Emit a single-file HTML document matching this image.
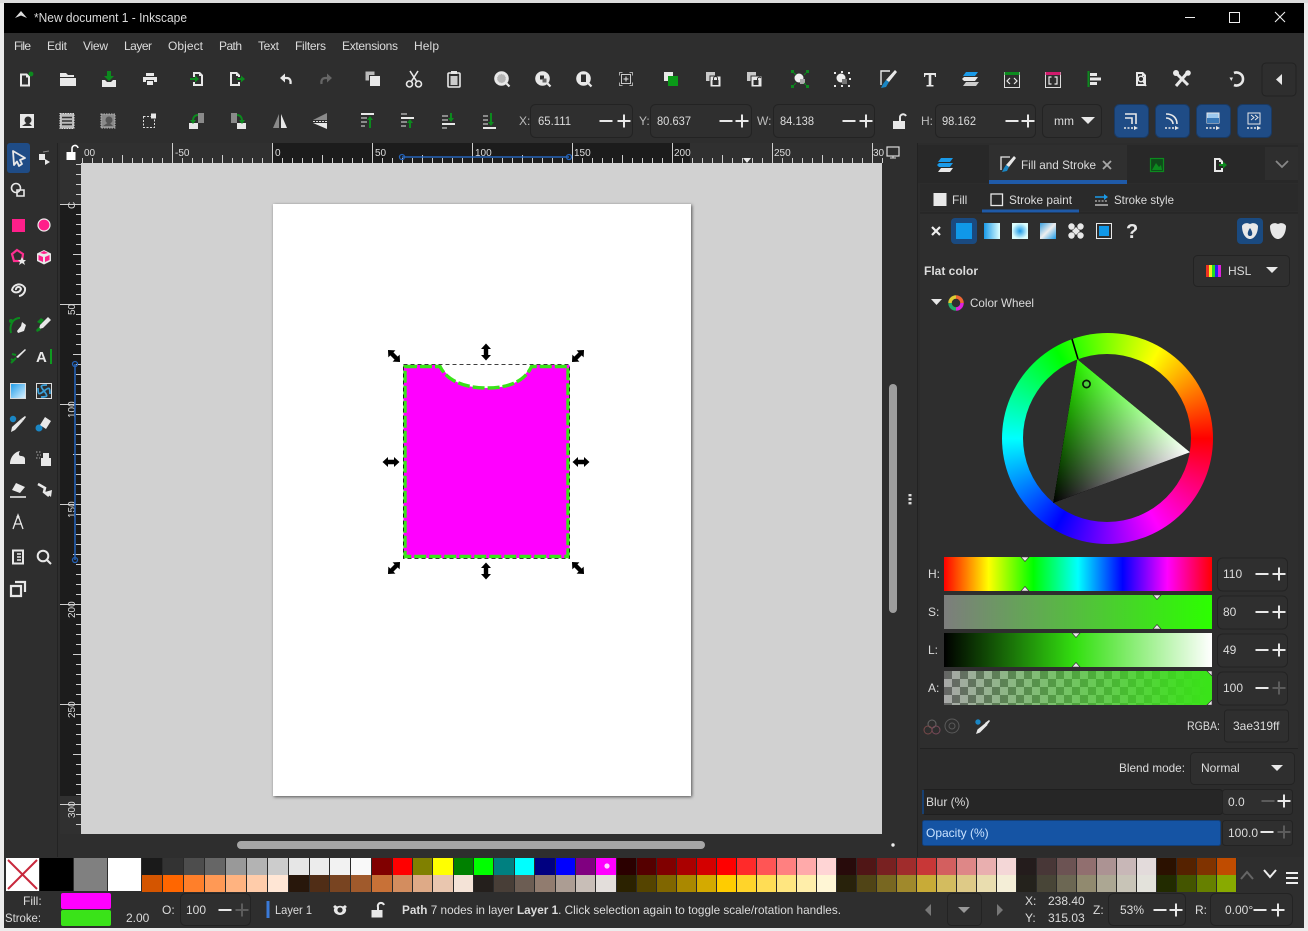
<!DOCTYPE html>
<html><head><meta charset="utf-8"><title>Inkscape</title>
<style>
html,body{margin:0;padding:0;width:1308px;height:931px;overflow:hidden;background:#ececec;font-family:"Liberation Sans",sans-serif}
.a{position:absolute}
#win{left:4px;top:3px;width:1300px;height:925px;background:#2e2e2e}
.row{position:absolute;display:flex;height:16.5px;left:142px}
.row i{display:block;height:100%;box-sizing:border-box;border-right:1px solid #2a2a2a}
.x i{width:20.95px}.y i{width:20.37px}.z i{width:20px}
.row span{display:flex}
svg{position:absolute;left:0;top:0}
text{font-family:"Liberation Sans",sans-serif;font-size:12px;fill:#dcdcdc}
.w{fill:#e8e8e8}.d{fill:#8a8a8a}.s{fill:none;stroke:#e8e8e8}.s:not([stroke-width]){stroke-width:1.6}.sd{fill:none;stroke:#666;stroke-width:1.6}
.g{fill:#0c8a1e}.sg{fill:none;stroke:#0c8a1e}.sg:not([stroke-width]){stroke-width:1.6}.b{fill:#1a9ae8}.p{fill:#ff1f8a}
.sp{fill:#2f2f2f;stroke:#232323}.bt{fill:#1f4c86;stroke:#1a3a63}
.add{mix-blend-mode:screen;mix-blend-mode:plus-lighter}
</style></head><body>
<div class="a" style="left:0;top:0;width:1308px;height:3px;background:#dcdcdc"></div>
<div class="a" id="win"></div>
<div class="a" style="left:4px;top:3px;width:1300px;height:30px;background:#000"></div>
<div class="a" style="left:917px;top:143px;width:387px;height:714px;background:#2c2c2c"></div>

<div class="a" style="left:6px;top:858px;width:33px;height:33px;background:#fff"></div>
<div class="a" style="left:40px;top:858px;width:33px;height:33px;background:#000"></div>
<div class="a" style="left:74px;top:858px;width:33px;height:33px;background:#808080"></div>
<div class="a" style="left:108px;top:858px;width:33px;height:33px;background:#fff"></div>

<div class="row" style="top:858px">
<span class="x"><i style="background:#1a1a1a"></i><i style="background:#333"></i><i style="background:#4d4d4d"></i><i style="background:#666"></i><i style="background:#999"></i><i style="background:#b3b3b3"></i><i style="background:#ccc"></i><i style="background:#e6e6e6"></i><i style="background:#ececec"></i><i style="background:#f2f2f2"></i><i style="background:#f9f9f9"></i></span>
<span class="y"><i style="background:#800000"></i><i style="background:#f00"></i><i style="background:#808000"></i><i style="background:#ff0"></i><i style="background:#008000"></i><i style="background:#0f0"></i><i style="background:#008080"></i><i style="background:#0ff"></i><i style="background:#000080"></i><i style="background:#00f"></i><i style="background:#800080"></i><i style="background:#f0f"></i></span>
<span class="z"><i style="background:#2b0000"></i><i style="background:#550000"></i><i style="background:#800000"></i><i style="background:#a00"></i><i style="background:#d40000"></i><i style="background:#f00"></i><i style="background:#ff2a2a"></i><i style="background:#f55"></i><i style="background:#ff8080"></i><i style="background:#faa"></i><i style="background:#ffd5d5"></i><i style="background:#280b0b"></i><i style="background:#501616"></i><i style="background:#782121"></i><i style="background:#a02c2c"></i><i style="background:#c83737"></i><i style="background:#d35f5f"></i><i style="background:#de8787"></i><i style="background:#e9afaf"></i><i style="background:#f4d7d7"></i><i style="background:#241c1c"></i><i style="background:#483737"></i><i style="background:#6c5353"></i><i style="background:#916f6f"></i><i style="background:#ac9393"></i><i style="background:#c8b7b7"></i><i style="background:#e3dbdb"></i><i style="background:#2b1100"></i><i style="background:#552200"></i><i style="background:#803300"></i><i style="background:#c04c00"></i></span>
</div>
<div class="row" style="top:875px">
<span class="x"><i style="background:#d45500"></i><i style="background:#f60"></i><i style="background:#ff7f2a"></i><i style="background:#f95"></i><i style="background:#ffb380"></i><i style="background:#fca"></i><i style="background:#ffe6d5"></i><i style="background:#28170b"></i><i style="background:#502d16"></i><i style="background:#784421"></i><i style="background:#a05a2c"></i></span>
<span class="y"><i style="background:#c87137"></i><i style="background:#d38d5f"></i><i style="background:#deaa87"></i><i style="background:#e9c6af"></i><i style="background:#f4e3d7"></i><i style="background:#241f1c"></i><i style="background:#483e37"></i><i style="background:#6c5d53"></i><i style="background:#917c6f"></i><i style="background:#ac9d93"></i><i style="background:#c8beb7"></i><i style="background:#e3dedb"></i></span>
<span class="z"><i style="background:#2b2200"></i><i style="background:#540"></i><i style="background:#806600"></i><i style="background:#a80"></i><i style="background:#d4aa00"></i><i style="background:#fc0"></i><i style="background:#ffd42a"></i><i style="background:#fd5"></i><i style="background:#ffe680"></i><i style="background:#fea"></i><i style="background:#fff6d5"></i><i style="background:#28220b"></i><i style="background:#504416"></i><i style="background:#786721"></i><i style="background:#a0892c"></i><i style="background:#c8ab37"></i><i style="background:#d3bc5f"></i><i style="background:#deca87"></i><i style="background:#e9ddaf"></i><i style="background:#f4eed7"></i><i style="background:#24221c"></i><i style="background:#484537"></i><i style="background:#6c6753"></i><i style="background:#918a6f"></i><i style="background:#aca793"></i><i style="background:#c8c4b7"></i><i style="background:#e3e2db"></i><i style="background:#222b00"></i><i style="background:#450"></i><i style="background:#668000"></i><i style="background:#8a0"></i></span>
</div>

<svg width="1308" height="931" viewBox="0 0 1308 931" xmlns="http://www.w3.org/2000/svg">
<defs>
<linearGradient id="wt" gradientUnits="userSpaceOnUse" x1="1190" y1="452.3" x2="1065.2" y2="431.4"><stop offset="0" stop-color="#fff"/><stop offset="1" stop-color="#000"/></linearGradient>
<linearGradient id="gt" gradientUnits="userSpaceOnUse" x1="1077.3" y1="359.3" x2="1121" y2="477.7"><stop offset="0" stop-color="#2af500"/><stop offset="1" stop-color="#000"/></linearGradient>
<linearGradient id="lg" x1="0" x2="1"><stop offset="0" stop-color="#1a9ae8"/><stop offset="1" stop-color="#dff"/></linearGradient>
<radialGradient id="rg"><stop offset="0" stop-color="#1a9ae8"/><stop offset="1" stop-color="#dff"/></radialGradient>
<linearGradient id="mg" x1="1" y1="1" x2="0" y2="0"><stop offset="0" stop-color="#1a9ae8"/><stop offset=".5" stop-color="#eee"/><stop offset="1" stop-color="#3aa0e0"/></linearGradient>
<linearGradient id="gr" x1="0" y1="0" x2="1" y2="1"><stop offset="0" stop-color="#1a9ae8"/><stop offset="1" stop-color="#e0f4ff"/></linearGradient>
<pattern id="rt" patternUnits="userSpaceOnUse" x="272" y="143" width="100" height="20"><path d="M.5 0V20M50.5 12V20M10.5 15V20M20.5 15V20M30.5 15V20M40.5 15V20M60.5 15V20M70.5 15V20M80.5 15V20M90.5 15V20" stroke="#cfcfcf" fill="none"/></pattern>
<pattern id="rl" patternUnits="userSpaceOnUse" x="60" y="204" width="21" height="100"><path d="M0 .5H21M13 50.5H21M16 10.5H21M16 20.5H21M16 30.5H21M16 40.5H21M16 60.5H21M16 70.5H21M16 80.5H21M16 90.5H21" stroke="#cfcfcf" fill="none"/></pattern>
<g id="mi"><rect x="-6.5" y="-1" width="13" height="2" fill="#e8e8e8"/></g>
<g id="pl"><path d="M-6.5 -1H-1V-6.5H1V-1H6.5V1H1V6.5H-1V1H-6.5Z" fill="#e8e8e8"/></g>
<g id="pld"><path d="M-6.5 -1H-1V-6.5H1V-1H6.5V1H1V6.5H-1V1H-6.5Z" fill="#5c5c5c"/></g>
<g id="mid"><rect x="-6.5" y="-1" width="13" height="2" fill="#5c5c5c"/></g>
<path id="da" d="M0 -8.5L5 -3H2.2V3H5L0 8.5L-5 3H-2.2V-3H-5Z" fill="#000"/>
</defs>

<!-- title bar -->
<path d="M15 18L21 11L27 18L21 15.5Z" fill="#ddd"/>
<text x="34" y="22" textLength="153" lengthAdjust="spacingAndGlyphs" style="font-size:13px">*New document 1 - Inkscape</text>
<rect x="1185" y="17" width="10" height="1" fill="#eee"/>
<rect x="1229.5" y="12.5" width="10" height="10" fill="none" stroke="#eee"/>
<path d="M1275 12L1285 22M1285 12L1275 22" stroke="#eee" stroke-width="1.1"/>

<!-- menu -->
<text x="14" y="50" textLength="17">File</text><text x="47" y="50" textLength="20">Edit</text><text x="83" y="50" textLength="25">View</text><text x="124" y="50" textLength="28">Layer</text><text x="168" y="50" textLength="35">Object</text><text x="219" y="50" textLength="23">Path</text><text x="258" y="50" textLength="21">Text</text><text x="295" y="50" textLength="31">Filters</text><text x="342" y="50" textLength="56">Extensions</text><text x="414" y="50" textLength="25">Help</text>

<!-- toolbar 1 -->
<g transform="translate(25,80)"><path class="w" fill-rule="evenodd" d="M-5 -6.5H2L5 -3.5V6.5H-5ZM-3 -4.5V4.5H3V-2.5H1V-4.5Z"/><circle cx="6" cy="-6" r="2.4" class="g"/></g>
<g transform="translate(68,79)"><path class="w" d="M-8 -6H-2L0 -4H6V-2H-8ZM-8 -1H8V7H-8Z"/></g>
<g transform="translate(109,79)"><path class="w" d="M-7 1H-4L-2 3H2L4 1H7V8H-7Z"/><path class="g" d="M-2 -8H2V-3H5L0 2L-5 -3H-2Z"/></g>
<g transform="translate(150,79)"><path class="w" d="M-4 -6H4V-3H-4ZM-7 -2H7V3H4V1H-4V3H-7ZM-3 2H3V6H-3Z"/></g>
<g transform="translate(198,79)"><path class="w" fill-rule="evenodd" d="M-4 -7H2L5 -4V7H-5V3H-3V5H3V-3H1V-5H-3V-2H-5V-7Z"/><path class="g" d="M-8 -1H-3V-3.5L1 0L-3 3.5V1H-8Z"/></g>
<g transform="translate(236,79)"><path class="w" fill-rule="evenodd" d="M-6 -7H1L4 -4V-2H2V-3H0V-5H-4V5H2V3H4V7H-6Z"/><path class="g" d="M1 -1H5V-3.5L9 0L5 3.5V1H1Z"/></g>
<path class="w" d="M280 78L285 73.5V82.5Z"/><path class="s" stroke-width="2.2" d="M284 78H286.5C290 78 291 80.5 290.5 84"/>
<path fill="#666" d="M332 78L327 73.5V82.5Z"/><path fill="none" stroke="#666" stroke-width="2.2" d="M328 78H325.5C322 78 321 80.5 321.5 84"/>
<g transform="translate(373,79)"><rect x="-7.5" y="-7.5" width="9" height="9" fill="#bbb"/><rect x="-3.5" y="-3.5" width="11" height="11" class="w" stroke="#2e2e2e"/></g>
<g transform="translate(414,79)"><path class="s" d="M-4 -8L3 3M4 -8L-3 3"/><circle cx="-4.5" cy="5" r="3" class="s"/><circle cx="4.5" cy="5" r="3" class="s"/></g>
<g transform="translate(454,79)"><rect x="-6" y="-6" width="12" height="14" rx="1" class="s"/><rect x="-3" y="-8" width="6" height="3" class="w"/><rect x="-3.5" y="-3" width="7" height="9" fill="#ccc"/></g>
<g transform="translate(502,79)"><circle cx="-.5" cy="-.5" r="7.3" class="w"/><circle cx="-.5" cy="-.5" r="4.6" fill="#b4b4b4" stroke="#e8e8e8" stroke-dasharray="1 1"/><path class="s" stroke-width="2.2" d="M4.5 4.5L7.5 7.5"/></g>
<g transform="translate(543,79)"><circle cx="-.5" cy="-.5" r="7.3" class="w"/><rect x="-3" y="-3.5" width="4" height="4" fill="#2e2e2e"/><rect x="-.5" y="-.5" width="4" height="4" fill="#666"/><path class="s" stroke-width="2.2" d="M4.5 4.5L7.5 7.5"/></g>
<g transform="translate(584,79)"><circle cx="-.5" cy="-.5" r="7.3" class="w"/><rect x="-3.5" y="-5" width="6" height="8.5" fill="#2e2e2e" stroke="#e8e8e8"/><path class="s" stroke-width="2.2" d="M4.5 4.5L7.5 7.5"/></g>
<g transform="translate(626,79)"><path fill="none" stroke="#aaa" d="M-6.5 -3.5V-6.5H-3.5M3.5 -6.5H6.5V-3.5M6.5 3.5V6.5H3.5M-3.5 6.5H-6.5V3.5"/><rect x="-4.5" y="-4.5" width="9" height="9" fill="none" stroke="#ccc"/><path d="M-2.5 0H2.5M0 -2.5V2.5" stroke="#e8e8e8"/></g>
<g transform="translate(671,79)"><rect x="-7" y="-7" width="9" height="9" class="w"/><rect x="-3" y="-3" width="10" height="10" fill="#0a9a18"/></g>
<g transform="translate(713,79)"><rect x="-7" y="-7" width="9" height="9" fill="#c9c9c9"/><rect x="-3" y="-3" width="11" height="11" class="w" stroke="#2e2e2e"/><path fill="#2e2e2e" d="M-.5 1H5.5V6H-.5Z"/><path fill="none" stroke="#2e2e2e" d="M.5 1V-.5A2 2 0 0 1 4.5 -.5V1"/></g>
<g transform="translate(754,79)"><rect x="-7" y="-7" width="9" height="9" fill="#c9c9c9"/><rect x="-3" y="-3" width="11" height="11" class="w" stroke="#2e2e2e"/><path fill="#2e2e2e" d="M-.5 1H4.5V6H-.5Z"/><path fill="none" stroke="#2e2e2e" d="M3.5 1V-.5A2 2 0 0 1 7 -1"/></g>
<g transform="translate(800,79)"><circle cx="-1" cy="-1" r="4.5" fill="#eee"/><path d="M0 0H5L5 5H0Z" fill="#aaa"/><g class="g"><rect x="-9" y="-9" width="3" height="3"/><rect x="6" y="-9" width="3" height="3"/><rect x="-9" y="6" width="3" height="3"/><rect x="6" y="6" width="3" height="3"/></g><path class="sg" d="M-6 -6L-4 -4M6 -6L4 -4M-6 6L-4 4M6 6L4 4" stroke-width="1"/></g>
<g transform="translate(842,79)"><circle cx="-1" cy="-1" r="4.5" fill="#eee"/><path d="M0 0H5L5 5H0Z" fill="#777"/><g class="w"><rect x="-8" y="-7" width="2" height="2"/><rect x="6" y="-7" width="2" height="2"/><rect x="-8" y="6" width="2" height="2"/><rect x="6" y="6" width="2" height="2"/><rect x="-1" y="6" width="2" height="2"/><rect x="-1" y="-8" width="2" height="2"/><rect x="7" y="-1" width="2" height="2"/></g></g>
<g transform="translate(888,79)"><path class="s" d="M2 -8H-7V6" stroke-width="1.4"/><path d="M7 -9L9 -7L1 3L-2 1Z" class="w"/><path d="M-2 1L1 3L-2 8L-7 9L-5 5Z" fill="#1a86c4"/></g>
<path d="M924 73H936V77H935L934.5 75H931.3V85H933.5V86.5H926.5V85H928.7V75H925.5L925 77H924Z" class="w"/>
<g transform="translate(971,79)"><path d="M-5 -7L7 -7L4 -3H-8Z" fill="#1a9ae8"/><path d="M-7 -2H7L4 2H-7L-9 0Z" class="w"/><path d="M-5 3H8L5 7H-8Z" fill="#ccc"/></g>
<g transform="translate(1012,80)"><rect x="-7.5" y="-7.5" width="15" height="15" fill="none" stroke="#ddd"/><rect x="-7.5" y="-8" width="15" height="3" fill="#0c8a1e"/><path fill="none" stroke="#e8e8e8" stroke-width="1.2" d="M-2 -2L-5 1L-2 4M2 -2L5 1L2 4"/></g>
<g transform="translate(1053,80)"><rect x="-7.5" y="-7.5" width="15" height="15" fill="none" stroke="#ddd"/><rect x="-7.5" y="-8" width="15" height="3" fill="#d01a6c"/><path fill="none" stroke="#e8e8e8" stroke-width="1.2" d="M-1.5 -3H-4V4H-1.5M1.5 -3H4V4H1.5"/></g>
<g transform="translate(1094,79)"><rect x="-6.5" y="-8" width="2" height="16" fill="#0c8a1e"/><rect x="-4" y="-6" width="7" height="3" class="w"/><rect x="-4" y="-1.5" width="11" height="3" class="w"/><rect x="-4" y="3" width="7" height="3" class="w"/></g>
<g transform="translate(1141,79)"><path class="w" fill-rule="evenodd" d="M-5 -7H2L5 -4V7H-5ZM-3 -5V5H3V-3H1V-5Z"/><circle cx="0" cy="0" r="2.8" fill="#2e2e2e" stroke="#e8e8e8" stroke-width="1.5"/><path class="s" d="M2 2L5 7"/></g>
<g transform="translate(1182,79)"><path class="s" stroke-width="3" d="M-6 -6L6 6"/><path class="s" stroke-width="3" d="M6 -7L-6 7"/><circle cx="-6" cy="-6" r="3" class="w"/><circle cx="6" cy="-6" r="2.8" fill="#e8e8e8"/></g>
<g transform="translate(1237,79)"><path class="s" stroke-width="2.6" d="M-3 -6A6.5 6.5 0 1 1 -3 6"/><path class="w" d="M-7.5 -1.5L-4 -1.5L-5.7 2Z"/></g>
<rect x="1262" y="63" width="34" height="33" rx="4" fill="#2e2e2e" stroke="#222"/><path d="M1282 74V85L1276 79.5Z" class="w"/>

<!-- toolbar 2 -->
<g transform="translate(27,121)"><rect x="-7" y="-7" width="14" height="14" class="w"/><circle cx="1" cy="-1" r="3.5" fill="#2e2e2e"/><path d="M-5 5H5L1 1L-2 3Z" fill="#2e2e2e"/></g>
<g transform="translate(67,121)"><rect x="-7" y="-7.5" width="14" height="15" fill="#bbb" stroke="#ddd" stroke-dasharray="1.5 1"/><path stroke="#333" stroke-width="1.5" d="M-5 -3.5H5M-5 0H5M-5 3.5H5"/></g>
<g transform="translate(108,121)"><rect x="-7" y="-7" width="14" height="14" fill="#8a8a8a" stroke="#bbb" stroke-dasharray="1.5 1"/><circle cx="1" cy="-1" r="3.5" fill="#555"/><path d="M-5 5H5L1 1L-2 3Z" fill="#555"/></g>
<g transform="translate(150,121)"><rect x="-6.5" y="-4.5" width="11" height="11" fill="none" stroke="#ddd" stroke-dasharray="2 1.5"/><rect x="1" y="-7.5" width="5" height="5" class="w"/></g>
<g transform="translate(197,121)"><rect x="-8" y="2" width="9" height="6" class="w"/><rect x="1" y="-8" width="6" height="10" fill="#8a8a8a"/><path class="sg" stroke-width="2" d="M-4 0C-4 -4 -2 -6 1 -6"/><path class="g" d="M-7 -1H-1L-4 3Z"/></g>
<g transform="translate(238,121)"><rect x="-1" y="2" width="9" height="6" class="w"/><rect x="-7" y="-8" width="6" height="10" fill="#8a8a8a"/><path class="sg" stroke-width="2" d="M4 0C4 -4 2 -6 -1 -6"/><path class="g" d="M7 -1H1L4 3Z"/></g>
<g transform="translate(280,121)"><path class="d" d="M-1 -7V7H-7Z"/><path class="w" d="M1 -7V7H7Z"/></g>
<g transform="translate(320,121)"><path class="d" d="M-7 -1H7V-8Z"/><path class="w" d="M-7 2H7L7 8Z"/><path stroke="#ddd" stroke-dasharray="2 1" d="M-7 .5H7"/></g>
<g transform="translate(367,121)"><rect x="-6" y="-8" width="13" height="2" class="w"/><rect x="-6" y="-4" width="6" height="2" class="d"/><rect x="-6" y="0" width="6" height="2" class="d"/><rect x="-6" y="4" width="4" height="2" class="d"/><path class="g" d="M2 7V-1H0L3 -5L6 -1H4V7Z"/></g>
<g transform="translate(408,121)"><rect x="-7" y="-4" width="13" height="2" class="w"/><rect x="-7" y="-8" width="6" height="2" class="d"/><rect x="-7" y="0" width="6" height="2" class="d"/><rect x="-7" y="4" width="5" height="2" class="d"/><path class="g" d="M1 7V2H-1L2 -2L5 2H3V7Z"/></g>
<g transform="translate(449,121)"><rect x="-7" y="2" width="13" height="2" class="w"/><rect x="-7" y="-6" width="6" height="2" class="d"/><rect x="-7" y="-2" width="6" height="2" class="d"/><rect x="-7" y="6" width="5" height="2" class="d"/><path class="g" d="M1 -8V-3H-1L2 1L5 -3H3V-8Z"/></g>
<g transform="translate(490,121)"><rect x="-7" y="6" width="13" height="2" class="w"/><rect x="-7" y="-6" width="5" height="2" class="d"/><rect x="-7" y="-2" width="5" height="2" class="d"/><rect x="-7" y="2" width="5" height="2" class="d"/><path class="g" d="M0 -8V1H-2L1 5L4 1H2V-8Z"/></g>

<!-- spin row -->
<text x="519" y="125" style="fill:#bbb">X:</text>
<rect x="530.5" y="104.5" width="102" height="33" rx="5" class="sp"/><text x="538" y="125" textLength="33" lengthAdjust="spacingAndGlyphs">65.111</text><use href="#mi" x="606" y="121"/><use href="#pl" x="624" y="121"/>
<text x="639" y="125" style="fill:#bbb">Y:</text>
<rect x="650.5" y="104.5" width="101" height="33" rx="5" class="sp"/><text x="657" y="125" textLength="34" lengthAdjust="spacingAndGlyphs">80.637</text><use href="#mi" x="726" y="121"/><use href="#pl" x="742" y="121"/>
<text x="757" y="125" style="fill:#bbb">W:</text>
<rect x="773.5" y="104.5" width="101" height="33" rx="5" class="sp"/><text x="780" y="125" textLength="34" lengthAdjust="spacingAndGlyphs">84.138</text><use href="#mi" x="849" y="121"/><use href="#pl" x="866" y="121"/>
<g transform="translate(899,121)"><rect x="-6" y="0" width="12" height="8" class="w"/><path class="s" stroke-width="2" d="M1 0V-3A3.2 3.2 0 0 1 7 -5"/></g>
<text x="921" y="125" style="fill:#bbb">H:</text>
<rect x="935.5" y="104.5" width="100" height="33" rx="5" class="sp"/><text x="942" y="125" textLength="34" lengthAdjust="spacingAndGlyphs">98.162</text><use href="#mi" x="1012" y="121"/><use href="#pl" x="1028" y="121"/>
<rect x="1042.5" y="104.5" width="59" height="33" rx="5" class="sp"/><text x="1054" y="125">mm</text><path class="w" d="M1081 117H1095L1088 124Z"/>
<g><rect x="1114.5" y="104.5" width="34" height="33" rx="5" class="bt"/><rect x="1155.5" y="104.5" width="34" height="33" rx="5" class="bt"/><rect x="1196.5" y="104.5" width="34" height="33" rx="5" class="bt"/><rect x="1237.5" y="104.5" width="34" height="33" rx="5" class="bt"/>
<g transform="translate(1131,121)"><path class="s" d="M-6 -7H5V3M-6 -3H1V3"/><path class="s" stroke-dasharray="2 1.5" d="M-7 7H3"/><path class="w" d="M3 5L7 7L3 9Z"/></g>
<g transform="translate(1172,121)"><path class="s" d="M-6 -7C1 -7 5 -3 5 3M-6 -3C-2 -3 1 0 1 3"/><path class="s" stroke-dasharray="2 1.5" d="M-7 7H3"/><path class="w" d="M3 5L7 7L3 9Z"/></g>
<g transform="translate(1213,121)"><rect x="-6" y="-8" width="12" height="10" fill="#9cc8ee" stroke="#e8e8e8"/><rect x="-6" y="-3" width="12" height="5" fill="#3a79b8"/><path class="s" stroke-dasharray="2 1.5" d="M-7 7H3"/><path class="w" d="M3 5L7 7L3 9Z"/></g>
<g transform="translate(1254,121)"><rect x="-6" y="-8" width="12" height="11" fill="none" stroke="#e8e8e8"/><path fill="none" stroke="#e8e8e8" d="M-3 -6L0 -3.5L-3 -1M1 -6L4 -3.5L1 -1"/><path class="s" stroke-dasharray="2 1.5" d="M-7 7H3"/><path class="w" d="M3 5L7 7L3 9Z"/></g></g>

<!-- left tool column -->
<rect x="7" y="143" width="23" height="30" rx="3" fill="#1f4c86"/>
<rect x="57" y="143" width="1" height="714" fill="#232323"/>
<path d="M13 151L25 158L20 160L22 164L19 166L17 161.5L14 165Z" fill="#1f4c86" stroke="#e8e8e8" stroke-width="1.8" stroke-linejoin="round"/>
<g transform="translate(43,159)"><rect x="-4" y="-5" width="6" height="6" class="w"/><path d="M2 0L7 3L2 6Z" class="w"/><path d="M0 -7L6 -8" stroke="#888"/></g>
<g transform="translate(18,190)"><circle cx="-2" cy="-2" r="4.5" class="s"/><path class="s" d="M-1 0H6V6H-1Z"/></g>
<rect x="12" y="219" width="13" height="13" fill="#ff1f8a"/>
<circle cx="44" cy="225" r="6" fill="#ff1f8a" stroke="#eee" stroke-width="1.2"/>
<g transform="translate(18,257)"><path d="M-1 -7L5 -3L4 4L-4 4L-6 -3Z" fill="none" stroke="#ff2f90" stroke-width="2.2"/><path d="M4 0L5.5 3H8L6 5L7 8L4 6L1 8L2 5L0 3H2.5Z" class="w"/></g>
<g transform="translate(44,257)"><path d="M0 -7L7 -3.5V4L0 7.5L-7 4V-3.5Z" class="w"/><path d="M0 -3L4 -4L0 -6L-4 -4Z" fill="#ff1f8a"/><path d="M-5.5 -2L-1 0V5L-5.5 3Z" fill="#ff1f8a"/><path d="M5.5 -2L1 0V5L5.5 3Z" fill="#ff1f8a"/></g>
<g transform="translate(18,289)"><path class="s" stroke-width="2" d="M-2 1A2.5 2.5 0 0 1 3 0A5 5 0 0 1 -6 1A7 7 0 0 1 7 -1A7 7 0 0 1 1 7"/></g>
<g transform="translate(18,325)"><path class="w" d="M4 -3L8 0L6 6L0 8L-1 6L3 1Z"/><path class="sg" stroke-width="2" d="M-7 8C-9 0 -5 -7 2 -7"/><circle cx="-7" cy="-4" r="2" class="g"/></g>
<g transform="translate(44,324)"><path class="w" d="M4 -7L7 -4L-1 4L-5 5L-4 1Z"/><path class="g" d="M-7 -2L-3 -6L0 -4L-3 0ZM-8 6L-5 3L-3 6L-7 8Z"/></g>
<g transform="translate(18,356)"><path class="w" d="M7 -7L8 -6L0 2L-2 1Z"/><path class="sg" stroke-width="2" d="M-7 7L-2 2M-6 -2L-2 -1M-7 3L-4 5"/></g>
<text x="36" y="362" style="font-size:15px;font-weight:bold;fill:#e8e8e8">A</text><rect x="50" y="349" width="2" height="15" fill="#0f9a20"/>
<rect x="10.5" y="383.5" width="15" height="15" fill="url(#gr)" stroke="#ddd"/>
<rect x="36.5" y="383.5" width="15" height="15" fill="#2e2e2e" stroke="#ddd"/>
<path d="M44 391C40 386 40 385 47 385M44 391C49 387 50 387 50 394M44 391C48 396 48 397 41 397M44 391C39 395 38 395 38 388" stroke="#3a9fd8" stroke-width="1.8" fill="none"/>
<g transform="translate(18,424)"><circle cx="-5" cy="-5" r="3.2" fill="#1a86c4"/><path d="M7 -8L8 -7L5 -3L3 -5Z" class="w"/><path d="M3 -5L5 -3L-3 6L-7 8L-6 3Z" class="w"/></g>
<g transform="translate(44,424)"><circle cx="-5" cy="4" r="3.5" fill="#1a86c4"/><path d="M1 -7L7 -3L2 5L-4 1Z" class="w"/></g>
<g transform="translate(18,458)"><path d="M-8 6C-8 0 -4 -6 2 -7C0 -4 1 -2 3 -2C5 -2 7 -1 7 1V6Z" class="w"/></g>
<g transform="translate(44,458)"><rect x="-3" y="0" width="10" height="8" class="w"/><rect x="-1" y="-5" width="6" height="5" class="w"/><path stroke="#aaa" stroke-dasharray="1.5 1.5" d="M-8 -6H-3M-7 -3H-3M-8 0H-4" fill="none"/></g>
<g transform="translate(18,490)"><path d="M-2 -7L7 -3L2 3L-6 0Z" fill="#e8e8e8"/><path class="s" d="M-8 7H8"/></g>
<g transform="translate(44,490)"><path class="s" stroke-width="2.5" d="M-6 -6L1 -2L0 2L5 6"/><path class="w" d="M1 2L7 7L8 0Z"/></g>
<g transform="translate(18,522)"><path class="s" stroke-width="1.3" d="M-5 7L0 -7L5 7M-4 2H4"/><circle cx="0" cy="-5" r="1.5" class="w"/></g>
<g transform="translate(18,557)"><path class="s" stroke-width="2" d="M-5 -6.5H5V6.5H-5Z"/><path stroke="#e8e8e8" stroke-width="1.5" d="M-1 -3H3M-1 0H3M-1 3H3"/></g>
<g transform="translate(44,557)"><circle cx="-1" cy="-1" r="5.3" class="s" stroke-width="2"/><path class="s" stroke-width="2" d="M3 3L7 7"/></g>
<g transform="translate(18,589)"><path class="s" stroke-width="2.2" d="M-7 -3H3V7H-7ZM-3 -7H7V3"/></g>

<!-- rulers -->
<rect x="60" y="143" width="823" height="20" fill="#303030"/>
<rect x="272" y="143" width="418" height="20" fill="#1c1c1c"/>
<rect x="81" y="143" width="802" height="20" fill="url(#rt)"/>
<rect x="60" y="163" width="21" height="671" fill="#303030"/>
<rect x="60" y="204" width="21" height="592" fill="#1c1c1c"/>
<rect x="60" y="163" width="21" height="671" fill="url(#rl)"/>
<g><text x="84" y="156" style="font-size:10px">00</text><text x="175" y="156" style="font-size:10px">-50</text><text x="275" y="156" style="font-size:10px">0</text><text x="375" y="156" style="font-size:10px">50</text><text x="475" y="156" style="font-size:10px">100</text><text x="574" y="156" style="font-size:10px">150</text><text x="674" y="156" style="font-size:10px">200</text><text x="774" y="156" style="font-size:10px">250</text><text x="873" y="156" style="font-size:10px">30</text></g>
<g><text transform="translate(75,209) rotate(-90)" style="font-size:10px">C</text><text transform="translate(75,315) rotate(-90)" style="font-size:10px">50</text><text transform="translate(75,418) rotate(-90)" style="font-size:10px">100</text><text transform="translate(75,518) rotate(-90)" style="font-size:10px">150</text><text transform="translate(75,618) rotate(-90)" style="font-size:10px">200</text><text transform="translate(75,718) rotate(-90)" style="font-size:10px">250</text><text transform="translate(75,818) rotate(-90)" style="font-size:10px">300</text></g>
<path d="M402 157H569" stroke="#2563b8" stroke-width="1.6"/><circle cx="402" cy="157" r="2.5" fill="none" stroke="#2563b8" stroke-width="1.3"/><circle cx="569" cy="157" r="2.5" fill="none" stroke="#2563b8" stroke-width="1.3"/>
<path d="M75 364V560" stroke="#2563b8" stroke-width="1.6"/><circle cx="75" cy="364" r="2.5" fill="none" stroke="#2563b8" stroke-width="1.3"/><circle cx="75" cy="560" r="2.5" fill="none" stroke="#2563b8" stroke-width="1.3"/>
<path d="M743 158H751L747 163Z" class="w"/>
<g transform="translate(71,153)"><rect x="-4.5" y="-1" width="9" height="8" fill="#fff"/><path d="M1 -1V-4A3 3 0 0 1 7 -5" fill="none" stroke="#fff" stroke-width="1.6"/></g>
<g transform="translate(893,152)"><rect x="-6" y="-5" width="12" height="9" fill="none" stroke="#ddd" stroke-width="1.2"/><path d="M-3 6H3M0 4V6" stroke="#ddd"/></g>

<!-- canvas -->
<rect x="81" y="163" width="801" height="671" fill="#d1d1d1"/>
<rect x="273" y="204" width="418" height="592" fill="#fff" style="filter:drop-shadow(1.5px 1.5px 1.5px rgba(0,0,0,.6))"/>
<path d="M403.5 365H441C448 381 466 389 487 389C508 389 524 381 531 365H569.5V558H403.5Z" fill="#f0f"/>
<path d="M405 366.5H440C447 381 465 388 487 388C509 388 525 381 531.5 366.5H568V556.5H405Z" fill="#f0f" stroke="#3ae319" stroke-width="3.4" stroke-dasharray="12 3"/>
<rect x="403.5" y="364.5" width="166" height="194" fill="none" stroke="#000" stroke-width=".8" stroke-dasharray="4 3"/>
<use href="#da" transform="translate(486,352)"/><use href="#da" transform="translate(486,571)"/>
<use href="#da" transform="translate(391,462) rotate(90)"/><use href="#da" transform="translate(581,462) rotate(90)"/>
<use href="#da" transform="translate(394,356) rotate(-45)"/><use href="#da" transform="translate(578,356) rotate(45)"/>
<use href="#da" transform="translate(394,568) rotate(45)"/><use href="#da" transform="translate(578,568) rotate(-45)"/>

<!-- scrollbars -->
<rect x="889" y="384" width="8" height="229" rx="4" fill="#9e9e9e"/>
<rect x="237" y="841" width="468" height="8" rx="4" fill="#a6a6a6"/>
<circle cx="893" cy="845" r="1.7" fill="#eee"/>
<g fill="#ddd"><rect x="908.5" y="494" width="3" height="2.4"/><rect x="908.5" y="498" width="3" height="2.4"/><rect x="908.5" y="502" width="3" height="2.4"/></g>
<rect x="917" y="143" width="1" height="714" fill="#222"/>

<!-- dock tabs -->
<rect x="918" y="145" width="380" height="38" fill="#282828"/>
<rect x="989" y="145" width="138" height="35" fill="#2f2f2f"/>
<rect x="989" y="180" width="138" height="4" fill="#1f5aa8"/>
<rect x="1265" y="147" width="33" height="33" fill="#2e2e2e"/>
<g transform="translate(945,165)"><path d="M-4 -7L8 -7L5 -3H-7Z" fill="#1a9ae8"/><path d="M-6 -2H8L5 2H-6L-8 0Z" fill="#1a9ae8"/><path d="M-4 3H8L5 7H-7Z" class="w"/></g>
<g transform="translate(1008,164)"><path class="s" stroke-width="1.3" d="M2 -7H-7V6"/><path d="M6 -8L8 -6L1 3L-2 1Z" class="w"/><path d="M-2 1L1 3L-1 7L-6 8L-4 4Z" fill="#1a86c4"/></g>
<text x="1021" y="169" textLength="75" lengthAdjust="spacingAndGlyphs">Fill and Stroke</text>
<path d="M1103 161L1111 169M1111 161L1103 169" stroke="#a8a8a8" stroke-width="1.8"/>
<g transform="translate(1157,165)"><rect x="-6.5" y="-6.5" width="13" height="13" fill="#0f4a1a" stroke="#0c8a1e" stroke-width="1.2"/><path class="g" d="M-5 5L-1 -2L2 2L4 0L5 5Z"/></g>
<g transform="translate(1219,165)"><path class="w" fill-rule="evenodd" d="M-5 -7H1L4 -4V-1H2V-3H0V-5H-3V5H2V3H4V7H-5Z"/><path class="g" d="M0 -1H4V-3.5L8 0L4 3.5V1H0Z"/></g>
<path d="M1276 161L1282 167L1288 161" fill="none" stroke="#888" stroke-width="1.8"/>

<!-- sub tabs -->
<rect x="920" y="184" width="378" height="27" fill="#2a2a2a"/>
<rect x="982" y="209.5" width="97" height="3.5" fill="#1f5aa8"/>
<rect x="933.5" y="193" width="13" height="13" fill="#e8e8e8"/><text x="952" y="204">Fill</text>
<rect x="991" y="194" width="11.5" height="11.5" fill="none" stroke="#e8e8e8" stroke-width="1.3"/><text x="1009" y="204" textLength="63" lengthAdjust="spacingAndGlyphs">Stroke paint</text>
<g transform="translate(1101,200)"><path d="M-6 -3H4" stroke="#1a9ae8" stroke-width="1.5"/><path d="M3 -6L7 -3L3 0Z" fill="#1a9ae8"/><path d="M-6 1H7" stroke="#ddd" stroke-dasharray="2 1.3"/><path d="M-6 5H7" stroke="#ddd" stroke-width="1.2"/></g>
<text x="1114" y="204" textLength="60" lengthAdjust="spacingAndGlyphs">Stroke style</text>
<rect x="920" y="213" width="378" height="535" fill="#2e2e2e"/>
<rect x="920" y="212.5" width="378" height="1" fill="#222"/><rect x="920" y="748" width="378" height="1" fill="#222"/>
<path d="M932 227L940 235M940 227L932 235" stroke="#eee" stroke-width="2.2"/>
<rect x="951" y="218" width="26" height="26" rx="4" fill="#1a4a80"/><rect x="956" y="223" width="16" height="16" fill="#1098e8"/>
<rect x="984" y="223" width="16" height="16" fill="url(#lg)"/>
<rect x="1012" y="223" width="16" height="16" fill="url(#rg)"/>
<rect x="1040" y="223" width="16" height="16" fill="url(#mg)"/>
<g transform="translate(1076,231)"><g fill="#e8e8e8"><circle cx="-4.5" cy="-4.5" r="3.2"/><circle cx="4.5" cy="-4.5" r="3.2"/><circle cx="-4.5" cy="4.5" r="3.2"/><circle cx="4.5" cy="4.5" r="3.2"/><path d="M0 -4L4 0L0 4L-4 0Z"/></g></g>
<rect x="1096.5" y="223.5" width="15" height="15" fill="#2e2e2e" stroke="#e8e8e8"/><rect x="1099" y="226" width="10" height="10" fill="#1098e8"/>
<text x="1126" y="238" style="font-size:20px;font-weight:bold;fill:#e8e8e8">?</text>
<rect x="1237" y="218" width="26" height="26" rx="4" fill="#1a4a80"/>
<path d="M1250 224C1254 222 1257 224 1258 226C1258 234 1254 239 1250 239C1246 239 1242 234 1242 226C1243 224 1246 222 1250 224Z" class="w"/><path d="M1250 228C1253 232 1253 236 1250 236C1247 236 1247 232 1250 228Z" fill="#1a4a80"/>
<path d="M1278 224C1282 222 1285 224 1286 226C1286 234 1282 239 1278 239C1274 239 1270 234 1270 226C1271 224 1274 222 1278 224Z" class="w"/>
<text x="924" y="275" style="font-weight:bold">Flat color</text>
<rect x="1193.5" y="255.5" width="96" height="31" rx="4" class="sp"/>
<g><rect x="1206" y="265" width="3" height="12" fill="#e32"/><rect x="1209" y="265" width="3" height="12" fill="#ee2"/><rect x="1212" y="265" width="3" height="12" fill="#2d2"/><rect x="1215" y="265" width="3" height="12" fill="#22e"/><rect x="1218" y="265" width="3" height="12" fill="#d2d"/></g>
<text x="1228" y="275">HSL</text><path class="w" d="M1266 267H1278L1272 273Z"/>
<path class="w" d="M931 299H942L936.5 305Z"/>
<path d="M956 297A6 6 0 0 1 962 303" fill="none" stroke="#e63" stroke-width="3.5"/><path d="M962 303A6 6 0 0 1 956 309" fill="none" stroke="#d2d" stroke-width="3.5"/><path d="M956 309A6 6 0 0 1 950 303" fill="none" stroke="#2a6" stroke-width="3.5"/><path d="M950 303A6 6 0 0 1 956 297" fill="none" stroke="#dc3" stroke-width="3.5"/>
<text x="970" y="307" textLength="64" lengthAdjust="spacingAndGlyphs">Color Wheel</text>
</svg>

<div class="a" style="left:1001.8px;top:332.8px;width:211px;height:211px;border-radius:50%;background:conic-gradient(from 30deg,#ff0 0deg,#f00 60deg,#f0f 120deg,#00f 180deg,#0ff 240deg,#0f0 300deg,#ff0 360deg)"></div>
<div class="a" style="left:1023.3px;top:354.3px;width:168px;height:168px;border-radius:50%;background:#2e2e2e"></div>
<div class="a" style="left:944px;top:557px;width:268px;height:34px;background:linear-gradient(90deg,#f00,#ff0 16.67%,#0f0 33.33%,#0ff 50%,#00f 66.67%,#f0f 83.33%,#f00)"></div>
<div class="a" style="left:944px;top:595px;width:268px;height:34px;background:linear-gradient(90deg,#7d7d7d,#2cff00)"></div>
<div class="a" style="left:944px;top:633px;width:268px;height:34px;background:linear-gradient(90deg,#000,#33e010 49%,#fff)"></div>
<div class="a" style="left:944px;top:671px;width:268px;height:34px;background:linear-gradient(90deg,rgba(58,227,25,0),#3ae319 98%),repeating-conic-gradient(#a8a8a8 0 25%,#666 0 50%) 0 0/16px 16px"></div>

<svg width="1308" height="931" viewBox="0 0 1308 931" xmlns="http://www.w3.org/2000/svg">
<g style="isolation:isolate">
<polygon points="1077.3,359.3 1190,452.3 1053.3,502.7" fill="#000"/>
<polygon class="add" points="1077.3,359.3 1190,452.3 1053.3,502.7" fill="url(#gt)"/>
<polygon class="add" points="1077.3,359.3 1190,452.3 1053.3,502.7" fill="url(#wt)"/>
</g>
<path d="M1072 339L1078 359" stroke="#000" stroke-width="1.6"/>
<circle cx="1086.5" cy="384" r="3.6" fill="#4bcf3a" stroke="#0a1a08" stroke-width="1.7"/>
<g class="w" stroke="#3a2a3a" stroke-width=".6"><path d="M1021 557H1029L1025 561.5Z"/><path d="M1021 591H1029L1025 586.5Z"/><path d="M1153 595H1161L1157 599.5Z"/><path d="M1153 629H1161L1157 624.5Z"/><path d="M1072 633H1080L1076 637.5Z"/><path d="M1072 667H1080L1076 662.5Z"/><path d="M1207 671H1212V676Z"/><path d="M1207 705H1212V700Z"/></g>
<text x="928" y="578">H:</text><text x="928" y="616">S:</text><text x="928" y="654">L:</text><text x="928" y="692">A:</text>
<rect x="1217.5" y="558" width="70" height="33" rx="5" class="sp"/><text x="1223" y="578">110</text><use href="#mi" x="1262" y="574"/><use href="#pl" x="1279" y="574"/>
<rect x="1217.5" y="596" width="70" height="33" rx="5" class="sp"/><text x="1223" y="616">80</text><use href="#mi" x="1262" y="612"/><use href="#pl" x="1279" y="612"/>
<rect x="1217.5" y="634" width="70" height="33" rx="5" class="sp"/><text x="1223" y="654">49</text><use href="#mi" x="1262" y="650"/><use href="#pl" x="1279" y="650"/>
<rect x="1217.5" y="672" width="70" height="33" rx="5" class="sp"/><text x="1223" y="692">100</text><use href="#mi" x="1262" y="688"/><use href="#pld" x="1279" y="688"/>
<g fill="none" stroke-width="1"><circle cx="932" cy="724" r="4" stroke="#666"/><circle cx="928" cy="730" r="4" stroke="#7a4a4a"/><circle cx="936" cy="730" r="4" stroke="#7a4a5a"/><circle cx="952" cy="726" r="7" stroke="#5a5a5a"/><circle cx="952" cy="726" r="3" stroke="#5a5a5a"/></g>
<g transform="translate(983,727)"><circle cx="-5" cy="-5" r="2.7" fill="#1a86c4"/><path d="M6 -7L7 -6L4 -2L2 -4Z" class="w"/><path d="M2.5 -4L4.5 -2L-3 5.5L-7 7L-5.5 2.5Z" class="w"/></g>
<text x="1187" y="730" textLength="33" lengthAdjust="spacingAndGlyphs">RGBA:</text>
<rect x="1224.5" y="710" width="64" height="32" rx="3" class="sp"/><text x="1233" y="730">3ae319ff</text>
<text x="1119" y="772" textLength="66" lengthAdjust="spacingAndGlyphs">Blend mode:</text>
<rect x="1190.5" y="752.5" width="104" height="32" rx="4" class="sp"/><text x="1201" y="772">Normal</text><path class="w" d="M1271 765H1283L1277 771Z"/>
<rect x="922.5" y="789.5" width="300" height="25" rx="3" fill="#262626" stroke="#1f1f1f"/><rect x="922" y="790" width="2" height="24" fill="#173f70"/>
<text x="926" y="806">Blur (%)</text>
<rect x="1222.5" y="789.5" width="70" height="25" rx="3" class="sp"/><text x="1228" y="806">0.0</text><use href="#mid" x="1268" y="801"/><use href="#pl" x="1284" y="801"/>
<rect x="922.5" y="820.5" width="298" height="25" rx="2" fill="#1554a4" stroke="#133f78"/>
<text x="926" y="837" style="fill:#c9e2ff">Opacity (%)</text>
<rect x="1222.5" y="820.5" width="70" height="25" rx="3" class="sp"/><text x="1228" y="837">100.0</text><use href="#mi" x="1267" y="832"/><use href="#pld" x="1284" y="832"/>

<!-- palette extras -->
<path d="M8 860L37 889M37 860L8 889" stroke="#c8283c" stroke-width="2"/>
<circle cx="607" cy="866" r="2.6" fill="#ffd0ff"/>
<path d="M1241 879L1247 872L1253 879" fill="none" stroke="#666" stroke-width="2"/>
<path d="M1264 870L1270 877L1276 870" fill="none" stroke="#eee" stroke-width="2"/>
<path d="M1286 873H1298M1286 878H1298M1286 883H1298" stroke="#eee" stroke-width="2"/>

<!-- status bar -->
<rect x="61" y="893" width="50" height="16" rx="2" fill="#f0f"/>
<rect x="61" y="910" width="50" height="16" rx="2" fill="#3ae319"/>
<text x="23" y="905">Fill:</text><text x="5" y="922" textLength="36" lengthAdjust="spacingAndGlyphs">Stroke:</text><text x="126" y="922">2.00</text>
<text x="162" y="914">O:</text>
<rect x="180.5" y="893.5" width="70" height="32" rx="5" class="sp"/><text x="186" y="914">100</text><use href="#mi" x="225" y="910"/><use href="#pld" x="242" y="910"/>
<rect x="266.5" y="901" width="3" height="17" fill="#3a7ad8"/>
<text x="275" y="914" textLength="37" lengthAdjust="spacingAndGlyphs">Layer 1</text>
<g transform="translate(340,910)"><path d="M-7 -3L-5 -5L-3 -3.5Q0 -5 3 -3.5L5 -5L7 -3L5.5 -2Q7 0 5 3Q0 7 -5 3Q-7 0 -5.5 -2Z" class="w"/><circle r="2.6" fill="#2e2e2e"/></g>
<g transform="translate(377,910)"><rect x="-5.5" y="0" width="11" height="7.5" class="w"/><path class="s" stroke-width="2" d="M1 0V-3A3 3 0 0 1 7 -5"/></g>
<text x="402" y="914" textLength="439" lengthAdjust="spacingAndGlyphs"><tspan style="font-weight:bold">Path</tspan> 7 nodes in layer <tspan style="font-weight:bold">Layer 1</tspan>. Click selection again to toggle scale/rotation handles.</text>
<path d="M931 904V916L925 910Z" fill="#777"/><rect x="947.5" y="893.5" width="34" height="32" rx="4" fill="#2e2e2e" stroke="#232323"/><path d="M958 907H970L964 913Z" fill="#999"/><path d="M997 904V916L1003 910Z" fill="#777"/>
<text x="1025" y="905">X:</text><text x="1048" y="905">238.40</text><text x="1025" y="922">Y:</text><text x="1048" y="922">315.03</text>
<text x="1093" y="914">Z:</text>
<rect x="1108.5" y="893.5" width="77" height="32" rx="5" class="sp"/><text x="1120" y="914">53%</text><use href="#mi" x="1160" y="910"/><use href="#pl" x="1176" y="910"/>
<text x="1195" y="914">R:</text>
<rect x="1210.5" y="893.5" width="82" height="32" rx="5" class="sp"/><text x="1225" y="914">0.00°</text><use href="#mi" x="1260" y="910"/><use href="#pl" x="1278" y="910"/>
</svg>
</body></html>
